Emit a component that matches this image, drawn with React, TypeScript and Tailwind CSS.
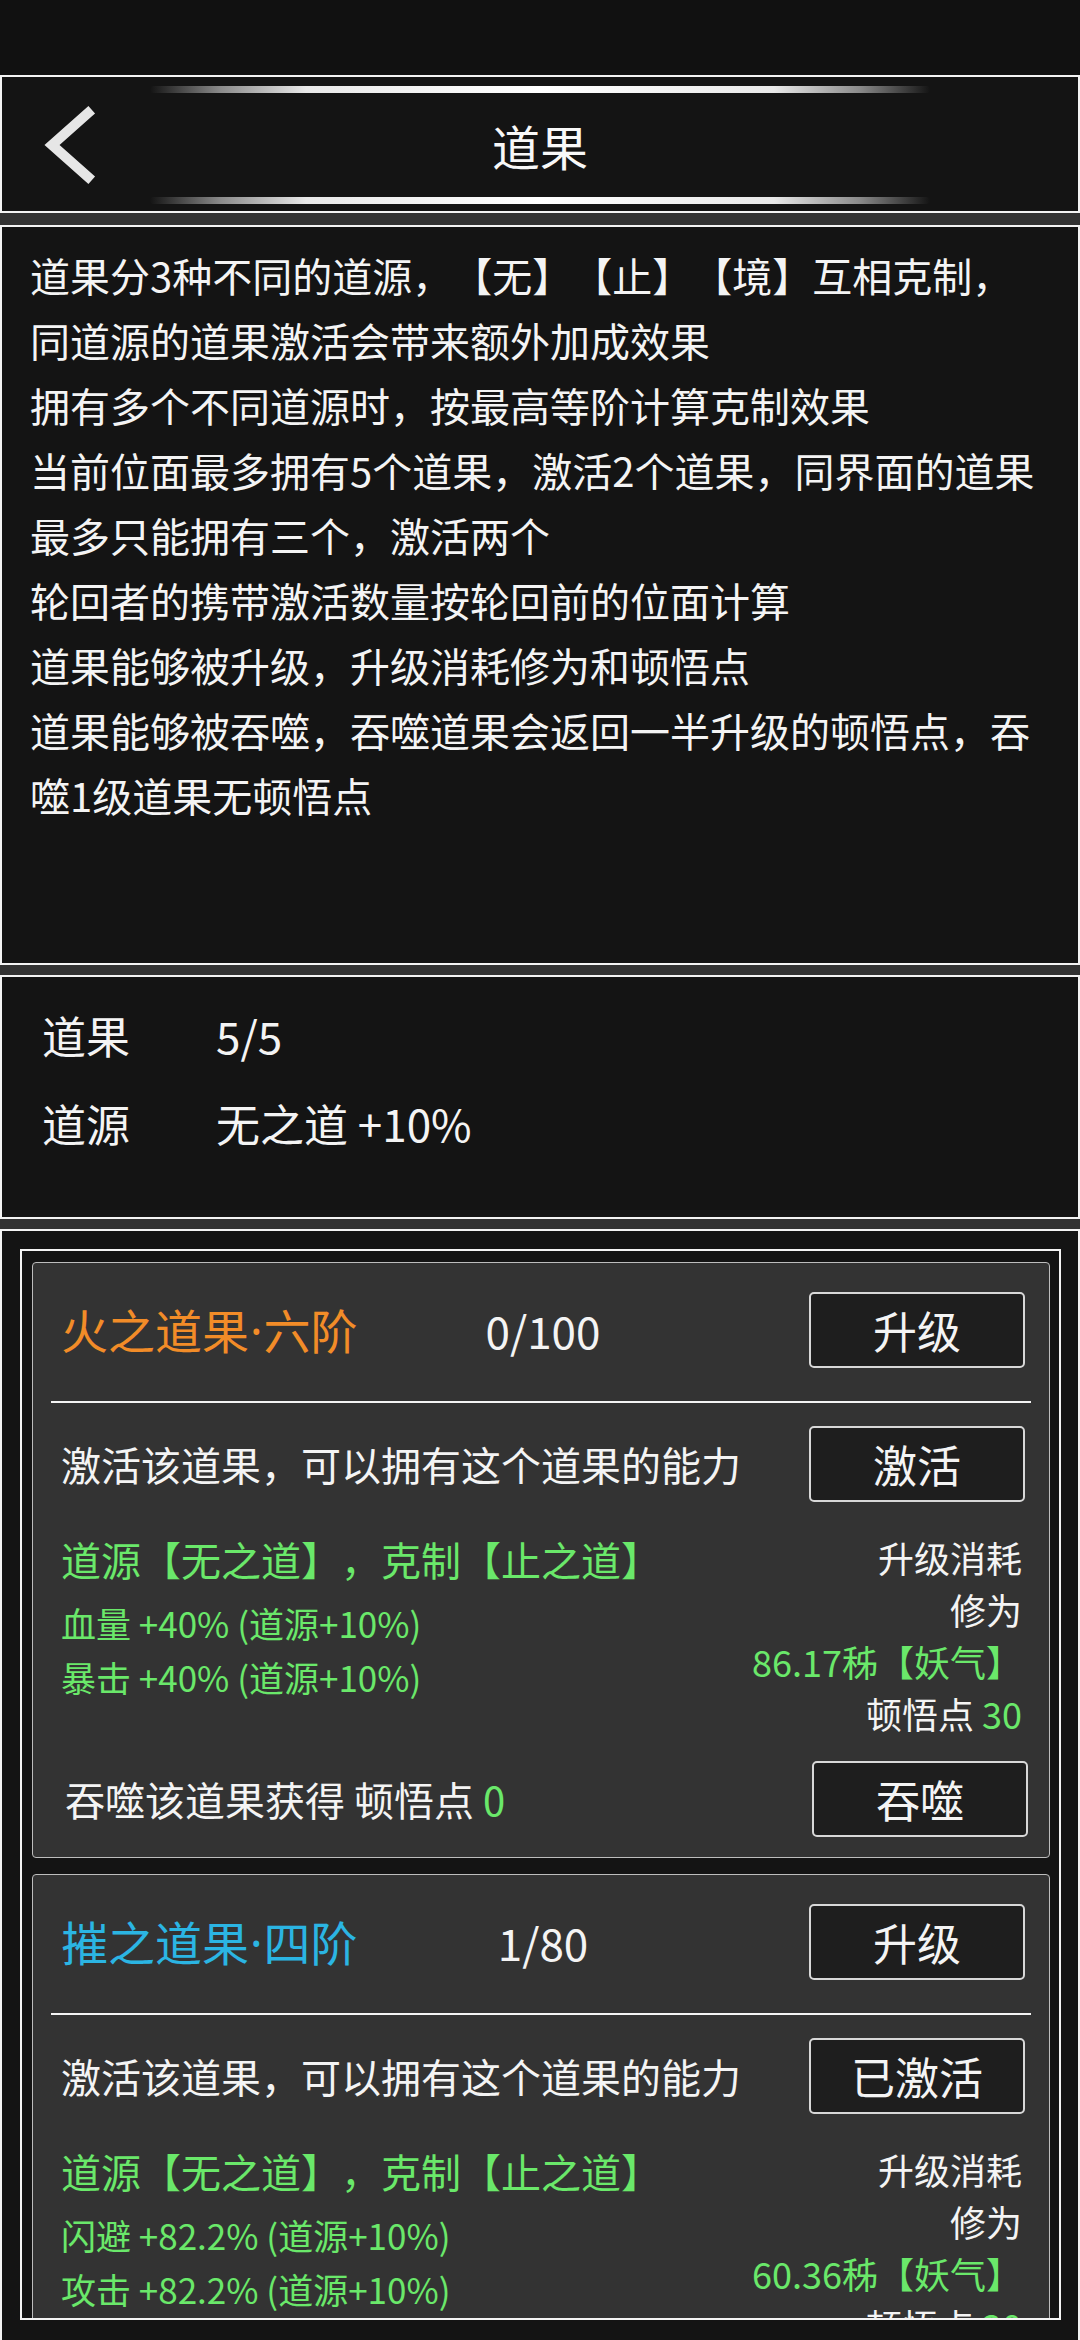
import React from 'react';

interface DaoCardProps {
  name: string;
  rank: string;
  titleClass: string;
  count: string;
  activeLabel: string;
  stats: string[];
  cost: string;
}

function GameButton({ label, className = '' }: { label: string; className?: string }) {
  return (
    <div
      className={`flex h-[76px] w-[216px] items-center justify-center rounded-[5px] border-2 border-[#d8d8d8] bg-[#1e1e1e] text-[44px] leading-none text-[#f4f4f4] ${className}`}
    >
      {label}
    </div>
  );
}

function GlowLine() {
  return (
    <div className="mx-auto h-[7px] w-[780px] rounded-full bg-[linear-gradient(90deg,transparent,#8a8a8a_9%,#e8e8e8_20%,#ffffff_50%,#e8e8e8_80%,#8a8a8a_91%,transparent)]" />
  );
}

function DaoCard({ name, rank, titleClass, count, activeLabel, stats, cost }: DaoCardProps) {
  return (
    <div className="shrink-0 rounded-[4px] border border-[#bdbdbd] bg-[#333333]">
      {/* title row */}
      <div className="grid grid-cols-[1fr_auto_1fr] items-center pl-[28px] pr-[24px] pt-[29px]">
        <span className={`whitespace-nowrap text-[47px] leading-[60px] ${titleClass}`}>
          {name}
          <span className="mx-[1px] font-['Noto_Sans',sans-serif]">·</span>
          {rank}
        </span>
        <span className="text-[44px] leading-[60px] text-[#f4f4f4]">{count}</span>
        <GameButton label="升级" className="justify-self-end" />
      </div>

      <div className="mx-[18px] mt-[33px] h-[2px] bg-[#f4f4f4]" />

      {/* activate row */}
      <div className="mt-[23px] flex items-center justify-between pl-[28px] pr-[24px]">
        <span className="text-[40px] leading-[56px] text-[#f4f4f4]">激活该道果，可以拥有这个道果的能力</span>
        <GameButton label={activeLabel} />
      </div>

      {/* effects + cost */}
      <div className="mt-[29px] flex justify-between pl-[28px] pr-[27px]">
        <div>
          <div className="whitespace-nowrap text-[40px] leading-[56px] text-[#6ae86a]">道源【无之道】，克制【止之道】</div>
          <div className="mt-[9px]">
            {stats.map((s) => (
              <div key={s} className="whitespace-nowrap text-[35px] leading-[54px] text-[#6ae86a]">
                {s}
              </div>
            ))}
          </div>
        </div>
        <div className="text-right text-[36px] leading-[52px] text-[#f4f4f4]">
          <div>升级消耗</div>
          <div>修为</div>
          <div className="text-[#6ae86a]">{cost}</div>
          <div>
            顿悟点 <span className="text-[#6ae86a]">30</span>
          </div>
        </div>
      </div>

      {/* devour row */}
      <div className="mt-[22px] flex items-center justify-between pb-[20px] pl-[32px] pr-[21px]">
        <span className="text-[40px] leading-[56px] text-[#f4f4f4]">
          吞噬该道果获得 顿悟点 <span className="text-[#6ae86a]">0</span>
        </span>
        <GameButton label="吞噬" />
      </div>
    </div>
  );
}

const descLines = [
  '道果分3种不同的道源，【无】【止】【境】互相克制，',
  '同道源的道果激活会带来额外加成效果',
  '拥有多个不同道源时，按最高等阶计算克制效果',
  '当前位面最多拥有5个道果，激活2个道果，同界面的道果',
  '最多只能拥有三个，激活两个',
  '轮回者的携带激活数量按轮回前的位面计算',
  '道果能够被升级，升级消耗修为和顿悟点',
  '道果能够被吞噬，吞噬道果会返回一半升级的顿悟点，吞',
  '噬1级道果无顿悟点',
];

export default function App() {
  return (
    <div className="flex h-[2340px] w-[1080px] flex-col overflow-hidden bg-[#333333] font-['Noto_Sans_CJK_SC','Noto_Sans',sans-serif] [text-spacing-trim:space-all]">
      {/* status bar area */}
      <div className="h-[75px] shrink-0 bg-[#111111]" />

      {/* header */}
      <div className="flex h-[138px] shrink-0 flex-col border-2 border-[#f4f4f4] bg-[#141414] pb-[7px] pt-[9px]">
        <GlowLine />
        <div className="grid flex-1 grid-cols-[1fr_auto_1fr] items-center">
          <svg width="52" height="80" viewBox="0 0 52 80" className="ml-[42px]">
            <polyline
              points="44,8 8,40 44,72"
              fill="none"
              stroke="#e6e6e6"
              strokeWidth="10"
              strokeLinecap="square"
              strokeLinejoin="miter"
            />
          </svg>
          <span className="text-[48px] leading-none text-[#f8f8f8]">道果</span>
          <span />
        </div>
        <GlowLine />
      </div>

      {/* description */}
      <div className="mt-[12px] h-[740px] shrink-0 border-2 border-[#f4f4f4] bg-[#141414] px-[28px] pt-[16px]">
        {descLines.map((l) => (
          <div key={l} className="whitespace-nowrap text-[40px] leading-[65px] text-[#f4f4f4]">
            {l}
          </div>
        ))}
      </div>

      {/* stats */}
      <div className="mt-[10px] h-[244px] shrink-0 border-2 border-[#f4f4f4] bg-[#141414] pl-[40px] pt-[14px]">
        <div className="grid grid-cols-[174px_1fr] text-[44px] leading-[88px] text-[#f4f4f4]">
          <span>道果</span>
          <span>5/5</span>
          <span>道源</span>
          <span>无之道 +10%</span>
        </div>
      </div>

      {/* list */}
      <div className="mt-[10px] flex-1 border-2 border-b-0 border-[#f4f4f4] bg-[#141414] pl-[18px] pr-[17px] pt-[18px]">
        <div className="flex h-[1071px] flex-col gap-[16px] overflow-hidden border-2 border-[#f4f4f4] pl-[10px] pr-[9px] pt-[11px]">
          <DaoCard
            name="火之道果"
            rank="六阶"
            titleClass="text-[#f28c28]"
            count="0/100"
            activeLabel="激活"
            stats={['血量 +40% (道源+10%)', '暴击 +40% (道源+10%)']}
            cost="86.17秭【妖气】"
          />
          <DaoCard
            name="摧之道果"
            rank="四阶"
            titleClass="text-[#2bb5e3]"
            count="1/80"
            activeLabel="已激活"
            stats={['闪避 +82.2% (道源+10%)', '攻击 +82.2% (道源+10%)']}
            cost="60.36秭【妖气】"
          />
        </div>
      </div>
    </div>
  );
}
